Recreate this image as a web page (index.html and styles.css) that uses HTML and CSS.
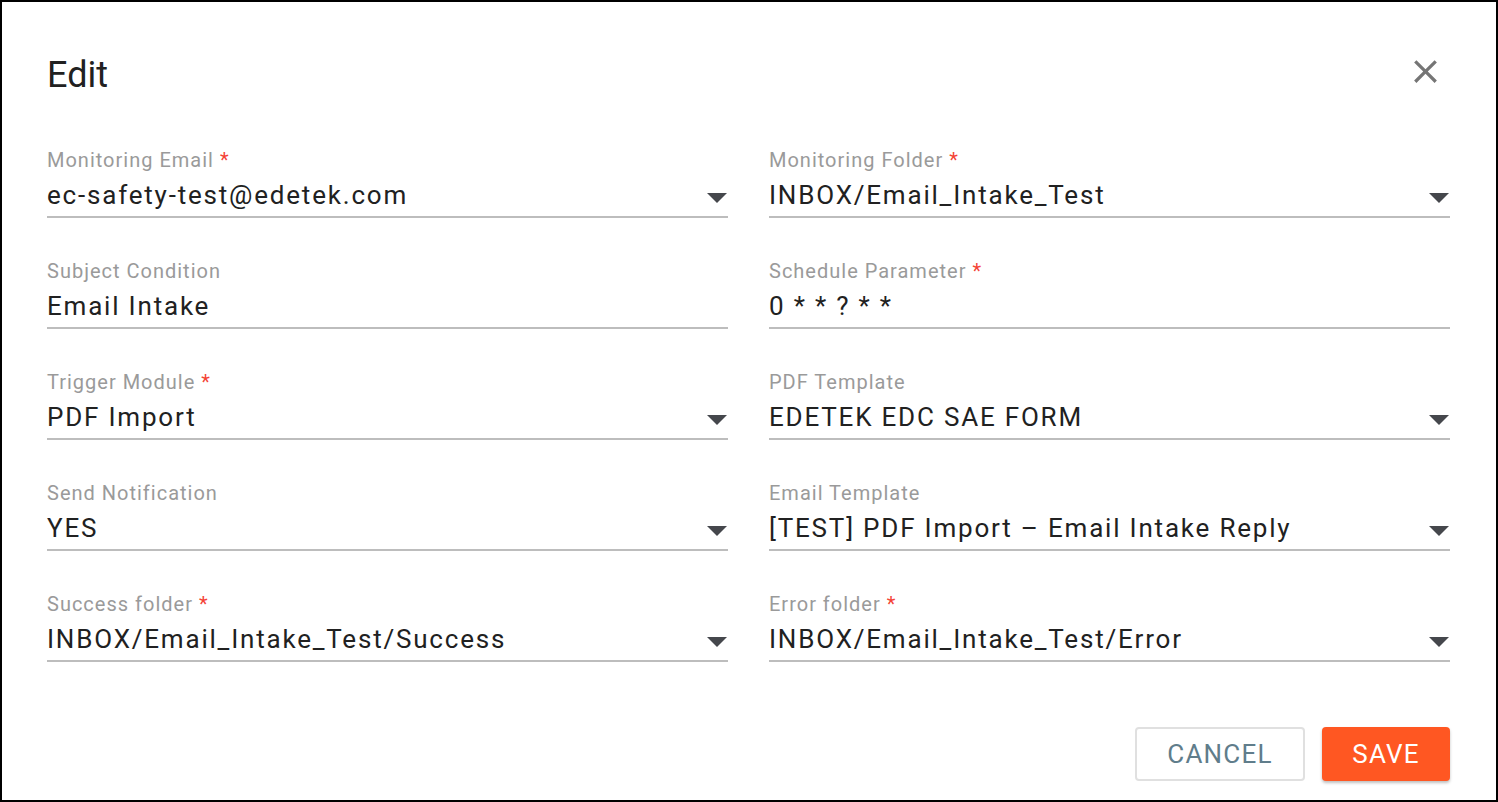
FILE: index.html
```html
<!DOCTYPE html>
<html lang="en">
<head>
<meta charset="utf-8">
<title>Edit</title>
<link rel="stylesheet" href="styles.css">
</head>
<body>
<div class="dialog">
  <div class="header">
    <h1 class="title">Edit</h1>
    <button class="close" aria-label="Close">
      <svg viewBox="0 0 24 24" width="39" height="39"><path d="M19 6.41L17.59 5 12 10.59 6.41 5 5 6.41 10.59 12 5 17.59 6.41 19 12 13.41 17.59 19 19 17.59 13.41 12z" fill="#757575"/></svg>
    </button>
  </div>
  <div class="fields">
    <div class="field">
      <div class="label">Monitoring Email <span class="req">*</span></div>
      <div class="value"><span class="text">ec-safety-test@edetek.com</span><span class="arrow"></span></div>
    </div>
    <div class="field">
      <div class="label">Monitoring Folder <span class="req">*</span></div>
      <div class="value"><span class="text">INBOX/Email_Intake_Test</span><span class="arrow"></span></div>
    </div>
    <div class="field">
      <div class="label">Subject Condition</div>
      <div class="value"><span class="text">Email Intake</span></div>
    </div>
    <div class="field">
      <div class="label">Schedule Parameter <span class="req">*</span></div>
      <div class="value"><span class="text">0 * * ? * *</span></div>
    </div>
    <div class="field">
      <div class="label">Trigger Module <span class="req">*</span></div>
      <div class="value"><span class="text">PDF Import</span><span class="arrow"></span></div>
    </div>
    <div class="field">
      <div class="label">PDF Template</div>
      <div class="value"><span class="text">EDETEK EDC SAE FORM</span><span class="arrow"></span></div>
    </div>
    <div class="field">
      <div class="label">Send Notification</div>
      <div class="value"><span class="text">YES</span><span class="arrow"></span></div>
    </div>
    <div class="field">
      <div class="label">Email Template</div>
      <div class="value"><span class="text">[TEST] PDF Import – Email Intake Reply</span><span class="arrow"></span></div>
    </div>
    <div class="field">
      <div class="label">Success folder <span class="req">*</span></div>
      <div class="value"><span class="text">INBOX/Email_Intake_Test/Success</span><span class="arrow"></span></div>
    </div>
    <div class="field">
      <div class="label">Error folder <span class="req">*</span></div>
      <div class="value"><span class="text">INBOX/Email_Intake_Test/Error</span><span class="arrow"></span></div>
    </div>
  </div>
  <div class="actions">
    <button class="btn btn-cancel">CANCEL</button>
    <button class="btn btn-save">SAVE</button>
  </div>
</div>
</body>
</html>
```

FILE: styles.css
```css
* { box-sizing: border-box; }
html, body { margin: 0; padding: 0; background: #fff; }
body { font-family: Roboto, "Liberation Sans", sans-serif; }

.dialog {
  width: 1498px;
  height: 802px;
  border: 2px solid #000;
  background: #fff;
  padding: 50px 46px 19px 45px;
  display: flex;
  flex-direction: column;
}

.header {
  display: flex;
  justify-content: space-between;
  align-items: flex-start;
  margin-bottom: 51px;
}
.title {
  margin: 0;
  font-size: 36px;
  line-height: 44px;
  font-weight: 400;
  color: #212121;
  padding-top: 1px;
}
.close {
  border: 0;
  background: none;
  padding: 0;
  margin: 0 5px 0 0;
  width: 39px;
  height: 39px;
  cursor: pointer;
}
.close svg { display: block; }

.fields {
  display: grid;
  grid-template-columns: 1fr 1fr;
  column-gap: 41px;
  row-gap: 41px;
}

.label {
  font-size: 20px;
  line-height: 24px;
  color: #9a9a9a;
  letter-spacing: 1px;
}
.req { color: #f44336; }

.value {
  display: flex;
  align-items: center;
  margin-top: 8px;
  height: 38px;
  padding-bottom: 6px;
  border-bottom: 2px solid #bdbdbd;
}
.text {
  flex: 1;
  font-size: 26px;
  line-height: 30px;
  color: #212121;
  letter-spacing: 1.8px;
  white-space: nowrap;
}
.arrow {
  width: 0;
  height: 0;
  border-left: 10px solid transparent;
  border-right: 10px solid transparent;
  border-top: 10px solid #45474c;
  margin: 5px 1px 0 0;
}

.actions {
  margin-top: auto;
  display: flex;
  justify-content: flex-end;
  gap: 17px;
}
.btn {
  height: 54px;
  font-family: Roboto, "Liberation Sans", sans-serif;
  font-size: 26px;
  font-weight: 400;
  letter-spacing: 1.2px;
  border-radius: 4px;
  cursor: pointer;
}
.btn-cancel {
  width: 170px;
  background: #fff;
  color: #607d8b;
  border: 2px solid #e0e0e0;
}
.btn-save {
  width: 128px;
  background: #ff5722;
  color: #fff;
  border: 0;
  box-shadow: 0 2px 3px rgba(0,0,0,0.25);
}
```
